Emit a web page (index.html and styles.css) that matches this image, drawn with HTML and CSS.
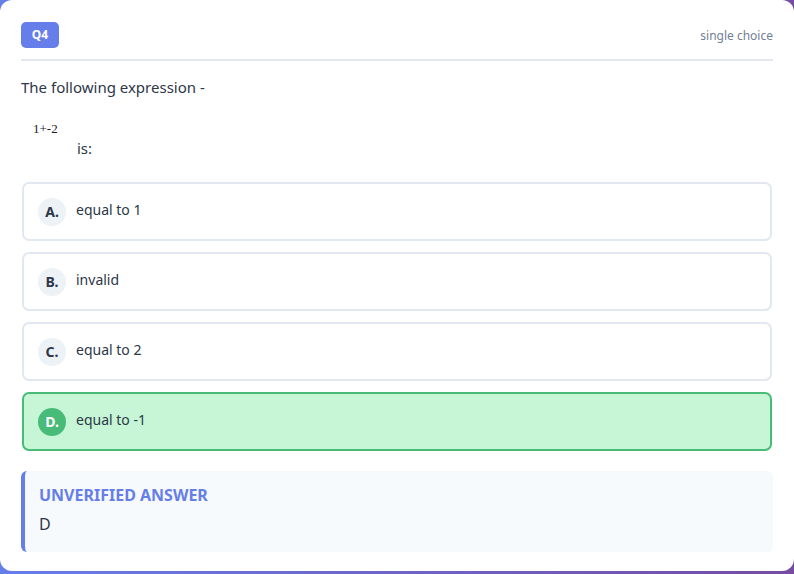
FILE: index.html
```html
<!DOCTYPE html>
<html lang="en">
<head>
    <meta charset="UTF-8">
    <meta name="viewport" content="width=device-width, initial-scale=1.0">
    <title>Question 4</title>
    <link rel="stylesheet" href="styles.css">
</head>
<body>

    <div class="question-card">
        <div class="question-header">
            <span class="question-number">Q4</span>
            <span class="question-type">single choice</span>
        </div>

        <div class="question-text">
            <p>The following expression -</p>
            <p class="expression"><span class="formula">1+-2</span>is:</p>
        </div>

        <div class="options">
            <div class="option">
                <span class="option-letter">A.</span>
                <span class="option-text">equal to 1</span>
            </div>
            <div class="option">
                <span class="option-letter">B.</span>
                <span class="option-text">invalid</span>
            </div>
            <div class="option">
                <span class="option-letter">C.</span>
                <span class="option-text">equal to 2</span>
            </div>
            <div class="option correct">
                <span class="option-letter">D.</span>
                <span class="option-text">equal to -1</span>
            </div>
        </div>

        <div class="answer-box">
            <div class="answer-label">UNVERIFIED ANSWER</div>
            <div class="answer-value">D</div>
        </div>
    </div>

</body>
</html>
```

FILE: styles.css
```css
body {
    font-family: "Noto Sans", "Open Sans", sans-serif;
    background: linear-gradient(90deg, #667eea 0%, #764ba2 100%);
    margin: 0;
    padding: 0;
    height: 574px;
    overflow: hidden;
}
.question-card {
    background-color: white;
    border-radius: 12px;
    height: 571px;
    box-sizing: border-box;
    padding: 22px 21px 0 21px;
}
.question-header {
    display: flex;
    justify-content: space-between;
    align-items: center;
    padding-bottom: 11px;
    border-bottom: 2px solid #e2e8f0;
}
.question-number {
    background-color: #667eea;
    color: white;
    font-weight: bold;
    font-size: 12px;
    width: 38px;
    height: 26px;
    line-height: 26px;
    text-align: center;
    border-radius: 5px;
}
.question-type {
    color: #718096;
    font-size: 12px;
}
.question-text {
    color: #2d3748;
    font-size: 15px;
    margin-top: 16px;
}
.question-text p {
    margin: 0;
}
.expression {
    display: flex;
    align-items: flex-end;
    margin-top: 23px !important;
}
.formula {
    display: inline-block;
    width: 44px;
    height: 38px;
    padding-left: 12px;
    font-family: "Liberation Serif", serif;
    font-size: 13px;
    line-height: 18px;
    color: #222;
}
.options {
    margin-top: 24px;
    display: flex;
    flex-direction: column;
    gap: 11px;
}
.option {
    display: flex;
    align-items: center;
    height: 59px;
    box-sizing: border-box;
    padding: 0 14px;
    border: 2px solid #e2e8f0;
    border-radius: 7px;
    margin: 0 1px;
}
.option-letter {
    width: 28px;
    height: 28px;
    border-radius: 50%;
    background-color: #edf2f7;
    color: #2d3748;
    font-weight: bold;
    font-size: 14px;
    display: flex;
    justify-content: center;
    align-items: center;
    margin-right: 10px;
    flex-shrink: 0;
}
.option-text {
    color: #2d3748;
    font-size: 14px;
    margin-top: -4px;
}
.option.correct {
    background-color: #c6f6d5;
    border-color: #48bb78;
}
.option.correct .option-letter {
    background-color: #48bb78;
    color: white;
}
.answer-box {
    margin-top: 20px;
    background-color: #f7fafc;
    border-left: 4px solid #667eea;
    border-radius: 6px;
    padding: 13px 14px 14px 14px;
    height: 81px;
    box-sizing: border-box;
}
.answer-label {
    color: #667eea;
    font-weight: bold;
    font-size: 16px;
    margin-bottom: 7px;
}
.answer-value {
    color: #2d3748;
    font-size: 16px;
}
```
